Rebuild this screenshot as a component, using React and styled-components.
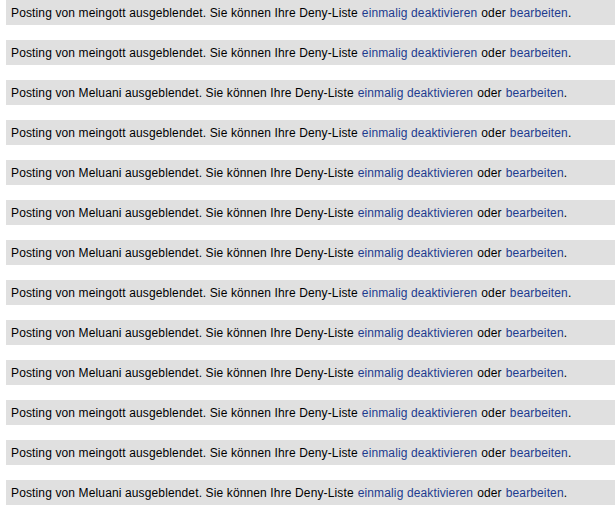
import React from "react"
import styled, { createGlobalStyle } from "styled-components"

const GlobalStyle = createGlobalStyle`
  body {
    margin: 0;
    background: #ffffff;
    font-family: "Liberation Sans", Arial, sans-serif;
  }
`

const List = styled.div`
  display: flex;
  flex-direction: column;
  gap: 15px;
  padding-left: 6px;
`

const Notice = styled.div`
  height: 25px;
  display: flex;
  align-items: center;
  padding-left: 5px;
  background-color: #e0e0e0;
  font-size: 12px;
  letter-spacing: 0.13px;
  color: #000000;
  white-space: nowrap;
`

const Action = styled.a`
  color: #1d3b8f;
  text-decoration: none;
  margin: 0 4px;
  &:last-child {
    margin-right: 0;
  }
`

const authors = [
  "meingott", "meingott", "Meluani", "meingott", "Meluani", "Meluani", "Meluani",
  "meingott", "Meluani", "Meluani", "meingott", "meingott", "Meluani",
]

function App() {
  return (
    <>
      <GlobalStyle />
      <List>
        {authors.map((name, i) => (
          <Notice key={i}>
            Posting von {name} ausgeblendet. Sie können Ihre Deny-Liste
            <Action href="#">einmalig deaktivieren</Action>oder
            <Action href="#">bearbeiten</Action>.
          </Notice>
        ))}
      </List>
    </>
  )
}

export default App
